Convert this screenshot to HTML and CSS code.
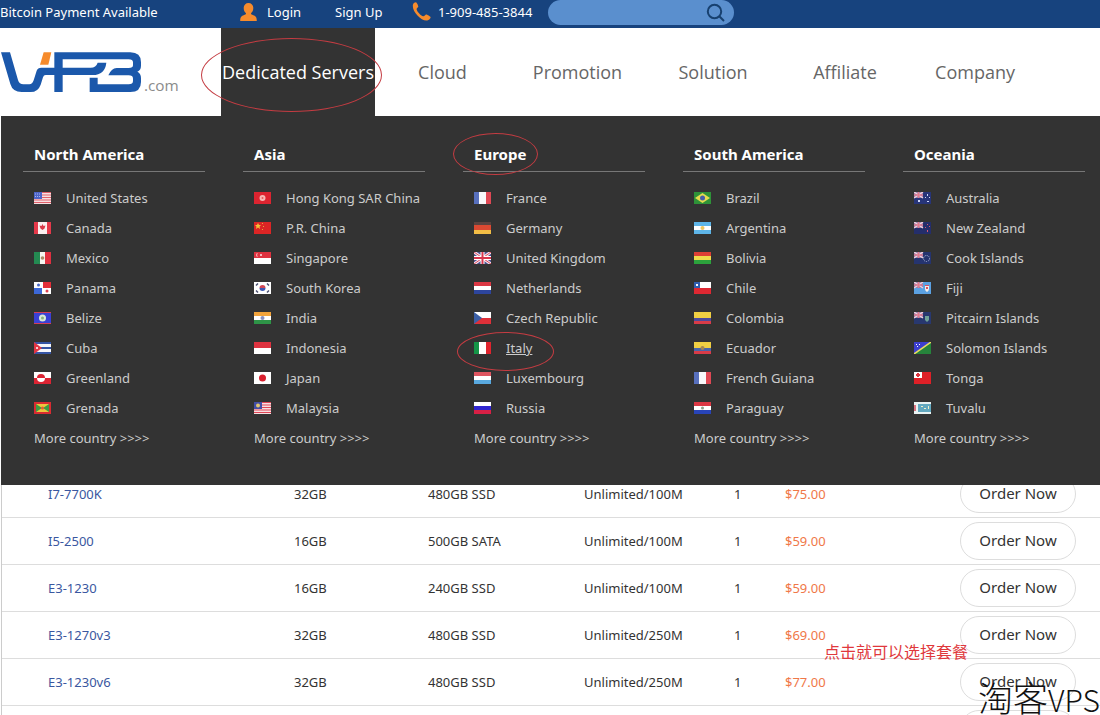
FILE: index.html
```html
<!DOCTYPE html>
<html lang="en">
<head>
<meta charset="utf-8">
<title>VPB.com - Dedicated Servers</title>
<link rel="stylesheet" href="styles.css">
</head>
<body>
<svg class="sprite" aria-hidden="true">
  <defs>
    <g id="jack"><path fill="#8d7fae" d="M0 0h9v6H0z"/><path stroke="#f3d3dc" stroke-width="1.4" d="M0 0l9 6M9 0L0 6"/><path stroke="#e07a8e" stroke-width="1.6" d="M4.500 0v6M0 3h9"/></g>
    <g id="sun"><circle cx="8.500" cy="6" r="2"/></g>
  </defs>
  <symbol id="us" viewBox="0 0 17 12"><path fill="#f6dfe2" d="M0 0h17v12H0z"/><path stroke="#e0606a" d="M0 .5h17M0 3h17M0 5.500h17M0 8h17M0 10.500h17"/><path fill="#4d64c8" d="M0 0h8v7H0z"/><path stroke="#a9b6ee" stroke-dasharray="1 1" d="M1 2h6M1 4.500h6"/></symbol>
  <symbol id="ca" viewBox="0 0 17 12"><path fill="#e5394a" d="M0 0h17v12H0z"/><path fill="#fbeff0" d="M4 0h9v12H4z"/><path fill="#d93848" d="M8.500 2l1 2 2-.5-1 3-2 1.500v2V8l-2-1.500-1-3 2 .5z"/></symbol>
  <symbol id="mx" viewBox="0 0 17 12"><path fill="#248a52" d="M0 0h6v12H0z"/><path fill="#f5f5f0" d="M6 0h5v12H6z"/><path fill="#df3040" d="M11 0h6v12h-6z"/><circle cx="8.500" cy="6" r="1.800" fill="#a88b68"/></symbol>
  <symbol id="pa" viewBox="0 0 17 12"><path fill="#fff" d="M0 0h17v12H0z"/><path fill="#e42f39" d="M9 0h8v6H9z"/><path fill="#3c68d8" d="M0 6h8v6H0z"/><circle cx="4.500" cy="3" r="1.500" fill="#4968c8"/><circle cx="13" cy="9" r="1.500" fill="#df4050"/></symbol>
  <symbol id="bz" viewBox="0 0 17 12"><path fill="#3a40d5" d="M0 0h17v12H0z"/><path fill="#d33f58" d="M0 0h17v1H0zM0 11h17v1H0z"/><circle cx="8.500" cy="6" r="3.500" fill="#d9ead8"/><circle cx="8.500" cy="6" r="1.500" fill="#8bb080"/></symbol>
  <symbol id="cu" viewBox="0 0 17 12"><path fill="#f5f7fb" d="M0 0h17v12H0z"/><path fill="#3555a5" d="M0 0h17v2H0zM0 5h17v2H0zM0 10h17v2H0z"/><path fill="#e03545" d="M0 0l8 6-8 6z"/><circle cx="3" cy="6" r="1" fill="#fff"/></symbol>
  <symbol id="gl" viewBox="0 0 17 12"><path fill="#fff" d="M0 0h17v6H0z"/><path fill="#dc2433" d="M0 6h17v6H0z"/><path fill="#dc2433" d="M3 6a4 4 0 0 1 8 0z"/><path fill="#fff" d="M3 6a4 4 0 0 0 8 0z"/></symbol>
  <symbol id="gd" viewBox="0 0 17 12"><path fill="#d92b31" d="M0 0h17v12H0z"/><path fill="#edc63d" d="M2 2h13v8H2z"/><path fill="#3d9a43" d="M2 2l6 4-6 4zM15 2L9 6l6 4z"/><circle cx="8.500" cy="6" r="1.500" fill="#e65c35"/></symbol>
  <symbol id="hk" viewBox="0 0 17 12"><path fill="#dc2430" d="M0 0h17v12H0z"/><circle cx="8.500" cy="6" r="3" fill="#f7b7b4"/><circle cx="8.500" cy="6" r="1" fill="#e65a5b"/></symbol>
  <symbol id="cn" viewBox="0 0 17 12"><path fill="#dc2525" d="M0 0h17v12H0z"/><path fill="#f2c338" d="M4 1l1 2h2L5.500 4.500 6 7 4 5.500 2 7l.5-2.500L1 3h2z"/><path fill="#e6a73a" d="M8 1h1v1H8zM9 4h1v1H9zM8 7h1v1H8z"/></symbol>
  <symbol id="sg" viewBox="0 0 17 12"><path fill="#de3340" d="M0 0h17v6H0z"/><path fill="#fff" d="M0 6h17v6H0z"/><path fill="#f3b8bb" d="M4 1a2 2 0 1 0 0 4 3 3 0 0 1 0-4zM6 2h2v2H6z"/></symbol>
  <symbol id="kr" viewBox="0 0 17 12"><path fill="#fff" d="M0 0h17v12H0z"/><path fill="#d24856" d="M5.500 6a3 3 0 0 1 6 0z"/><path fill="#3c59b5" d="M5.500 6a3 3 0 0 0 6 0z"/><path stroke="#4a4f70" stroke-width="1.500" d="M2 3.500l2-2M13 1.500l2 2M2 8.500l2 2M13 10.500l2-2"/></symbol>
  <symbol id="in" viewBox="0 0 17 12"><path fill="#f2a43c" d="M0 0h17v4H0z"/><path fill="#fff" d="M0 4h17v4H0z"/><path fill="#2e9447" d="M0 8h17v4H0z"/><g fill="#8790c0"><use href="#sun"/></g></symbol>
  <symbol id="id" viewBox="0 0 17 12"><path fill="#de3340" d="M0 0h17v6H0z"/><path fill="#fff" d="M0 6h17v6H0z"/></symbol>
  <symbol id="jp" viewBox="0 0 17 12"><path fill="#fff" d="M0 0h17v12H0z"/><circle cx="8.500" cy="6" r="3.500" fill="#d9202e"/></symbol>
  <symbol id="my" viewBox="0 0 17 12"><path fill="#f6dfe2" d="M0 0h17v12H0z"/><path stroke="#df4656" d="M0 .5h17M0 3h17M0 5.500h17M0 8h17M0 10.500h17"/><path fill="#434ea5" d="M0 0h8v7H0z"/><circle cx="4" cy="3.500" r="2" fill="#e0c670"/></symbol>
  <symbol id="fr" viewBox="0 0 17 12"><path fill="#5870bd" d="M0 0h6v12H0z"/><path fill="#f8f8fa" d="M5 0h7v12H5z"/><path fill="#df4854" d="M12 0h5v12h-5z"/></symbol>
  <symbol id="de" viewBox="0 0 17 12"><path fill="#5a4340" d="M0 0h17v4H0z"/><path fill="#db4932" d="M0 3h17v5H0z"/><path fill="#f2bd45" d="M0 8h17v4H0z"/></symbol>
  <symbol id="gb" viewBox="0 0 17 12"><path fill="#4c508f" d="M0 0h17v12H0z"/><path stroke="#f7e5eb" stroke-width="3" d="M0 0l17 12M17 0L0 12"/><path stroke="#d94c62" d="M0 0l17 12M17 0L0 12"/><path stroke="#fff" stroke-width="4" d="M8.500 0v12M0 6h17"/><path stroke="#d8354d" stroke-width="2" d="M8.500 0v12M0 6h17"/></symbol>
  <symbol id="nl" viewBox="0 0 17 12"><path fill="#dc3844" d="M0 0h17v4H0z"/><path fill="#fff" d="M0 4h17v4H0z"/><path fill="#2d459d" d="M0 8h17v4H0z"/></symbol>
  <symbol id="cz" viewBox="0 0 17 12"><path fill="#fff" d="M0 0h17v6H0z"/><path fill="#df3039" d="M0 6h17v6H0z"/><path fill="#3b5fa6" d="M0 0l8 6-8 6z"/></symbol>
  <symbol id="it" viewBox="0 0 17 12"><path fill="#159447" d="M0 0h6v12H0z"/><path fill="#fff" d="M5 0h7v12H5z"/><path fill="#e0242e" d="M12 0h5v12h-5z"/></symbol>
  <symbol id="lu" viewBox="0 0 17 12"><path fill="#df5560" d="M0 0h17v4H0z"/><path fill="#fff" d="M0 4h17v4H0z"/><path fill="#59a9e0" d="M0 8h17v4H0z"/></symbol>
  <symbol id="ru" viewBox="0 0 17 12"><path fill="#fff" d="M0 0h17v4H0z"/><path fill="#3026d0" d="M0 4h17v4H0z"/><path fill="#d82045" d="M0 8h17v4H0z"/></symbol>
  <symbol id="br" viewBox="0 0 17 12"><path fill="#2e9238" d="M0 0h17v12H0z"/><path fill="#e5db4f" d="M8.500 1L16 6l-7.500 5L1 6z"/><circle cx="8.500" cy="6" r="2.500" fill="#455ea8"/></symbol>
  <symbol id="ar" viewBox="0 0 17 12"><path fill="#5eb5e8" d="M0 0h17v12H0z"/><path fill="#fff" d="M0 4h17v4H0z"/><g fill="#edc65f"><use href="#sun"/></g></symbol>
  <symbol id="bo" viewBox="0 0 17 12"><path fill="#dd3f35" d="M0 0h17v4H0z"/><path fill="#efdb4b" d="M0 4h17v4H0z"/><path fill="#2ca23c" d="M0 8h17v4H0z"/></symbol>
  <symbol id="cl" viewBox="0 0 17 12"><path fill="#fff" d="M0 0h17v6H0z"/><path fill="#de2832" d="M0 6h17v6H0z"/><path fill="#315eae" d="M0 0h6v6H0z"/><path fill="#fff" d="M2 2h2v2H2z"/></symbol>
  <symbol id="co" viewBox="0 0 17 12"><path fill="#f0cf43" d="M0 0h17v6H0z"/><path fill="#4c4a9c" d="M0 6h17v3H0z"/><path fill="#d83c48" d="M0 9h17v3H0z"/></symbol>
  <symbol id="ec" viewBox="0 0 17 12"><path fill="#f0cf43" d="M0 0h17v6H0z"/><path fill="#4965a9" d="M0 6h17v3H0z"/><path fill="#d83c48" d="M0 9h17v3H0z"/><circle cx="8.500" cy="6" r="2" fill="#a68752"/></symbol>
  <symbol id="py" viewBox="0 0 17 12"><path fill="#dc3844" d="M0 0h17v4H0z"/><path fill="#fff" d="M0 4h17v4H0z"/><path fill="#2844b8" d="M0 8h17v4H0z"/><circle cx="8.500" cy="6" r="1.500" fill="#8fa08b"/></symbol>
  <symbol id="au" viewBox="0 0 17 12"><path fill="#273579" d="M0 0h17v12H0z"/><use href="#jack"/><path fill="#cdd5f4" d="M4 8h2v2H4zM13 2h1v2h-1zM11 5h1v1h-1zM15 5h1v1h-1zM13 9h2v1h-2z"/></symbol>
  <symbol id="nz" viewBox="0 0 17 12"><path fill="#242e6b" d="M0 0h17v12H0z"/><use href="#jack"/><path fill="#d85770" d="M13 2h1v1h-1zM11 5h1v1h-1zM15 4h1v1h-1zM13 8h1v2h-1z"/></symbol>
  <symbol id="ck" viewBox="0 0 17 12"><path fill="#25346f" d="M0 0h17v12H0z"/><use href="#jack"/><circle cx="12.500" cy="6.500" r="3" fill="none" stroke="#b8c1df" stroke-dasharray="1 1"/></symbol>
  <symbol id="fj" viewBox="0 0 17 12"><path fill="#5ba1e2" d="M0 0h17v12H0z"/><use href="#jack"/><path fill="#f6eee9" d="M11 3h4v4q0 2-2 3-2-1-2-3z"/><path fill="#db5361" d="M11 3h4v1h-4zM12 5h2v2h-2z"/></symbol>
  <symbol id="pn" viewBox="0 0 17 12"><path fill="#28386f" d="M0 0h17v12H0z"/><use href="#jack"/><path fill="#6fa398" d="M11 4h4v4l-2 2-2-2z"/></symbol>
  <symbol id="sb" viewBox="0 0 17 12"><path fill="#3d3fce" d="M0 0h17L0 12z"/><path fill="#26833b" d="M17 0v12H0z"/><path stroke="#eadb62" stroke-width="1.500" d="M0 12L17 0"/><path fill="#fff" d="M2 2h1v1H2zM5 2h1v1H5zM3 4h1v1H3z"/></symbol>
  <symbol id="to" viewBox="0 0 17 12"><path fill="#de2027" d="M0 0h17v12H0z"/><path fill="#fff" d="M0 0h8v6H0z"/><path fill="#dc3540" d="M3 1h2v4H3zM2 2h4v2H2z"/></symbol>
  <symbol id="tv" viewBox="0 0 17 12"><path fill="#e9f2f2" d="M0 0h17v12H0z"/><path fill="#62a8bf" d="M4 2h13v8H4z"/><path fill="#d97480" d="M0 3h2v6H0z"/><path fill="#eef0c8" d="M7 4h2v1H7zM10 6h2v1h-2zM14 4h1v3h-1z"/></symbol>
</svg>

<div class="page">
  <div class="topbar">
    <span class="notice">Bitcoin Payment Available</span>
    <a class="login" href="#">
      <svg width="17" height="18" viewBox="0 0 17 18"><path fill="#f68b2c" d="M8.500 0a4.800 4.800 0 0 1 4.800 5c0 2.500-1 4.200-2.300 5.200 0 1 .8 1.500 2.300 2 2.500.8 3.500 1.800 3.500 5.800H.2c0-4 1-5 3.500-5.800 1.500-.5 2.300-1 2.300-2C4.700 9.200 3.700 7.500 3.700 5a4.800 4.800 0 0 1 4.800-5z"/></svg>
      Login</a>
    <a class="signup" href="#">Sign Up</a>
    <span class="phone">
      <svg width="19" height="19" viewBox="0 0 19 19"><path fill="#f68b2c" d="M1 2.500C1.500 1 3.500 0 4.300.4 5 .8 6.500 4 6.300 4.800c-.2.900-1.800 1.300-1.700 2.400.2 2 4.200 6.600 6.600 7 1.200.2 2-1.700 3-1.800.9 0 4.200 1.900 4.400 2.700.2.900-1.600 3.100-3.400 3.400C9 19.400-.6 9 1 2.500z"/></svg>
      1-909-485-3844</span>
    <form class="search">
      <input type="search" aria-label="Search">
      <button type="button" aria-label="Submit search"><svg width="20" height="20" viewBox="0 0 20 20"><circle cx="8.500" cy="8.500" r="6.700"/><path d="M13.300 13.300l4.700 4.700"/></svg></button>
    </form>
  </div>

  <header class="header">
    <a class="logo" href="#" aria-label="VPB.com">
      <svg width="190" height="60" viewBox="0 0 570 180">
        <path fill="#1b58ab" d="M3 37H30L54 120Q58 133 70 133H88Q97 133 101 121L110 92Q113 83 124 83H163V37H391Q423 37 423 67V77Q423 90 412 95Q423 100 423 114V126Q423 156 391 156H269V113H293V133H386Q399 133 399 123V116Q399 106 386 106H325Q334 85 350 84H386Q399 84 399 76V67Q399 58 386 58H188V83H272Q288 83 293 68H319Q315 105 278 105H188V156H163V105H137Q131 105 129 112L122 134Q114 156 92 156H65Q38 156 31 132Z"/>
        <path fill="#f68b2c" d="M131 37h23l-9 37h-25z"/>
        <text class="logo-com" x="432" y="152">.com</text>
      </svg>
    </a>
    <nav class="nav">
      <a class="active" href="#">Dedicated Servers</a>
      <a href="#">Cloud</a>
      <a href="#">Promotion</a>
      <a href="#">Solution</a>
      <a href="#">Affiliate</a>
      <a href="#">Company</a>
    </nav>
    <div class="menu">
      <section class="region">
        <h2>North America</h2>
        <ul>
          <li><a href="#"><svg><use href="#us"/></svg><span>United States</span></a></li>
          <li><a href="#"><svg><use href="#ca"/></svg><span>Canada</span></a></li>
          <li><a href="#"><svg><use href="#mx"/></svg><span>Mexico</span></a></li>
          <li><a href="#"><svg><use href="#pa"/></svg><span>Panama</span></a></li>
          <li><a href="#"><svg><use href="#bz"/></svg><span>Belize</span></a></li>
          <li><a href="#"><svg><use href="#cu"/></svg><span>Cuba</span></a></li>
          <li><a href="#"><svg><use href="#gl"/></svg><span>Greenland</span></a></li>
          <li><a href="#"><svg><use href="#gd"/></svg><span>Grenada</span></a></li>
          <li><a href="#">More country &gt;&gt;&gt;&gt;</a></li>
        </ul>
      </section>
      <section class="region">
        <h2>Asia</h2>
        <ul>
          <li><a href="#"><svg><use href="#hk"/></svg><span>Hong Kong SAR China</span></a></li>
          <li><a href="#"><svg><use href="#cn"/></svg><span>P.R. China</span></a></li>
          <li><a href="#"><svg><use href="#sg"/></svg><span>Singapore</span></a></li>
          <li><a href="#"><svg><use href="#kr"/></svg><span>South Korea</span></a></li>
          <li><a href="#"><svg><use href="#in"/></svg><span>India</span></a></li>
          <li><a href="#"><svg><use href="#id"/></svg><span>Indonesia</span></a></li>
          <li><a href="#"><svg><use href="#jp"/></svg><span>Japan</span></a></li>
          <li><a href="#"><svg><use href="#my"/></svg><span>Malaysia</span></a></li>
          <li><a href="#">More country &gt;&gt;&gt;&gt;</a></li>
        </ul>
      </section>
      <section class="region">
        <h2>Europe</h2>
        <ul>
          <li><a href="#"><svg><use href="#fr"/></svg><span>France</span></a></li>
          <li><a href="#"><svg><use href="#de"/></svg><span>Germany</span></a></li>
          <li><a href="#"><svg><use href="#gb"/></svg><span>United Kingdom</span></a></li>
          <li><a href="#"><svg><use href="#nl"/></svg><span>Netherlands</span></a></li>
          <li><a href="#"><svg><use href="#cz"/></svg><span>Czech Republic</span></a></li>
          <li><a class="current" href="#"><svg><use href="#it"/></svg><span>Italy</span></a></li>
          <li><a href="#"><svg><use href="#lu"/></svg><span>Luxembourg</span></a></li>
          <li><a href="#"><svg><use href="#ru"/></svg><span>Russia</span></a></li>
          <li><a href="#">More country &gt;&gt;&gt;&gt;</a></li>
        </ul>
      </section>
      <section class="region">
        <h2>South America</h2>
        <ul>
          <li><a href="#"><svg><use href="#br"/></svg><span>Brazil</span></a></li>
          <li><a href="#"><svg><use href="#ar"/></svg><span>Argentina</span></a></li>
          <li><a href="#"><svg><use href="#bo"/></svg><span>Bolivia</span></a></li>
          <li><a href="#"><svg><use href="#cl"/></svg><span>Chile</span></a></li>
          <li><a href="#"><svg><use href="#co"/></svg><span>Colombia</span></a></li>
          <li><a href="#"><svg><use href="#ec"/></svg><span>Ecuador</span></a></li>
          <li><a href="#"><svg><use href="#fr"/></svg><span>French Guiana</span></a></li>
          <li><a href="#"><svg><use href="#py"/></svg><span>Paraguay</span></a></li>
          <li><a href="#">More country &gt;&gt;&gt;&gt;</a></li>
        </ul>
      </section>
      <section class="region">
        <h2>Oceania</h2>
        <ul>
          <li><a href="#"><svg><use href="#au"/></svg><span>Australia</span></a></li>
          <li><a href="#"><svg><use href="#nz"/></svg><span>New Zealand</span></a></li>
          <li><a href="#"><svg><use href="#ck"/></svg><span>Cook Islands</span></a></li>
          <li><a href="#"><svg><use href="#fj"/></svg><span>Fiji</span></a></li>
          <li><a href="#"><svg><use href="#pn"/></svg><span>Pitcairn Islands</span></a></li>
          <li><a href="#"><svg><use href="#sb"/></svg><span>Solomon Islands</span></a></li>
          <li><a href="#"><svg><use href="#to"/></svg><span>Tonga</span></a></li>
          <li><a href="#"><svg><use href="#tv"/></svg><span>Tuvalu</span></a></li>
          <li><a href="#">More country &gt;&gt;&gt;&gt;</a></li>
        </ul>
      </section>
    </div>
  </header>

  <main class="plans">
    <table>
      <colgroup><col class="cpu"><col class="ram"><col class="disk"><col class="traffic"><col class="ip"><col class="cost"><col class="action"></colgroup>
      <tbody>
        <tr><td><a href="#">I7-7700K</a></td><td>32GB</td><td>480GB SSD</td><td>Unlimited/100M</td><td>1</td><td class="price">$75.00</td><td><button type="button">Order Now</button></td></tr>
        <tr><td><a href="#">I5-2500</a></td><td>16GB</td><td>500GB SATA</td><td>Unlimited/100M</td><td>1</td><td class="price">$59.00</td><td><button type="button">Order Now</button></td></tr>
        <tr><td><a href="#">E3-1230</a></td><td>16GB</td><td>240GB SSD</td><td>Unlimited/100M</td><td>1</td><td class="price">$59.00</td><td><button type="button">Order Now</button></td></tr>
        <tr><td><a href="#">E3-1270v3</a></td><td>32GB</td><td>480GB SSD</td><td>Unlimited/250M</td><td>1</td><td class="price">$69.00</td><td><button type="button">Order Now</button></td></tr>
        <tr><td><a href="#">E3-1230v6</a></td><td>32GB</td><td>480GB SSD</td><td>Unlimited/250M</td><td>1</td><td class="price">$77.00</td><td><button type="button">Order Now</button></td></tr>
        <tr><td></td><td></td><td></td><td></td><td></td><td></td><td><button type="button" aria-label="Order"></button></td></tr>
      </tbody>
    </table>
  </main>

  <div class="ring ring-servers"></div>
  <div class="ring ring-europe"></div>
  <div class="ring ring-italy"></div>
  <div class="note" lang="zh">点击就可以选择套餐</div>
  <div class="watermark" lang="zh">淘客<span>VPS</span></div>
</div>
</body>
</html>
```
FILE: styles.css
```css
* { box-sizing: border-box; }

body {
  margin: 0;
  background: #fff;
  color: #333;
  font: 13px/20px "Noto Sans", "Open Sans", sans-serif;
}

a { color: inherit; text-decoration: none; }
button, input { font: inherit; }
.sprite { position: absolute; width: 0; height: 0; }

.page {
  position: relative;
  height: 100vh;
  overflow: hidden;
}

/* Top bar */
.topbar {
  display: flex;
  height: 28px;
  background: #17437e;
  color: #fff;
  line-height: 25px;
}
.notice { width: 240px; }
.login { display: flex; width: 95px; gap: 10px; }
.login svg { margin-top: 3px; }
.signup { width: 77px; }
.phone { display: flex; width: 136px; gap: 7px; white-space: nowrap; }
.phone svg { margin-top: 2px; }
.search {
  display: flex;
  width: 186px;
  height: 25px;
  border-radius: 13px;
  background: #5a8fce;
}
.search input {
  flex: 1;
  min-width: 0;
  padding: 0 0 0 14px;
  border: 0;
  outline: 0;
  background: none;
  color: #fff;
}
.search button {
  padding: 0 8px;
  border: 0;
  background: none;
  line-height: 0;
}
.search svg { fill: none; stroke: #17406f; stroke-width: 2; }

/* Header */
.header {
  position: relative;
  display: flex;
  height: 88px;
}
.logo { width: 221px; padding-top: 12px; }
.logo svg { display: block; }
.logo-com { fill: #8b8b8b; font: 46px "Open Sans", sans-serif; }
.nav {
  flex: 1;
  display: grid;
  grid-template-columns: 154fr 135fr 135fr 136fr 128fr 132fr 59fr;
  color: #666;
  font-family: "Open Sans", sans-serif;
  font-size: 18px;
  line-height: 88px;
  text-align: center;
  white-space: nowrap;
}
.nav .active { background: #333; color: #fff; }

/* Country menu */
.menu {
  position: absolute;
  z-index: 1;
  top: 100%;
  left: 1px;
  right: -1px;
  display: grid;
  grid-template-columns: repeat(5, 1fr);
  padding: 24px 0 32px;
  background: #333;
  color: #ccc;
}
.region { padding: 0 16px 0 22px; }
.region h2 {
  margin: 0 0 11px;
  padding: 0 11px 2px;
  border-bottom: 1px solid #777;
  color: #fff;
  font-size: 15px;
  line-height: 29px;
}
.region ul { margin: 0; padding: 0 0 0 11px; list-style: none; }
.region li { height: 30px; line-height: 30px; white-space: nowrap; }
.region li a { display: flex; align-items: center; gap: 15px; }
.region svg { flex: none; width: 17px; height: 12px; }
.region .current span { text-decoration: underline; }

/* Plans */
.plans { padding: 355px 0 0 1px; }
.plans table {
  width: 100%;
  border-collapse: separate;
  border-spacing: 0;
  table-layout: fixed;
  border-left: 1px solid #ccc;
}
.plans td {
  height: 47px;
  padding: 0;
  border-bottom: 1px solid #ddd;
  white-space: nowrap;
}
.plans td:first-child { padding-left: 46px; }
.plans td a { color: #3a57a0; }
.plans .price { color: #f07848; }
.plans button {
  display: block;
  width: 116px;
  height: 38px;
  padding: 0 0 2px;
  border: 1px solid #ddd;
  border-radius: 19px;
  background: #fff;
  color: #333;
  font-size: 15px;
}
.cpu { width: 292px; }
.ram { width: 134px; }
.disk { width: 156px; }
.traffic { width: 150px; }
.ip { width: 51px; }
.cost { width: 175px; }

/* Annotations */
.ring {
  position: absolute;
  z-index: 2;
  border: 1px solid #c43c42;
  border-radius: 50%;
  pointer-events: none;
}
.ring-servers { left: 201px; top: 38px; width: 181px; height: 74px; }
.ring-europe { left: 453px; top: 133px; width: 85px; height: 42px; }
.ring-italy { left: 457px; top: 332px; width: 97px; height: 39px; }
.note {
  position: absolute;
  z-index: 2;
  left: 824px;
  top: 639px;
  color: #e0383c;
  font: 16px/24px "Noto Sans CJK SC", sans-serif;
}
.watermark {
  position: absolute;
  z-index: 2;
  right: 0;
  bottom: 0;
  color: #111;
  font: 300 35px/32px "Noto Sans CJK SC", sans-serif;
  white-space: nowrap;
}
.watermark span { font-size: 30px; }
```
